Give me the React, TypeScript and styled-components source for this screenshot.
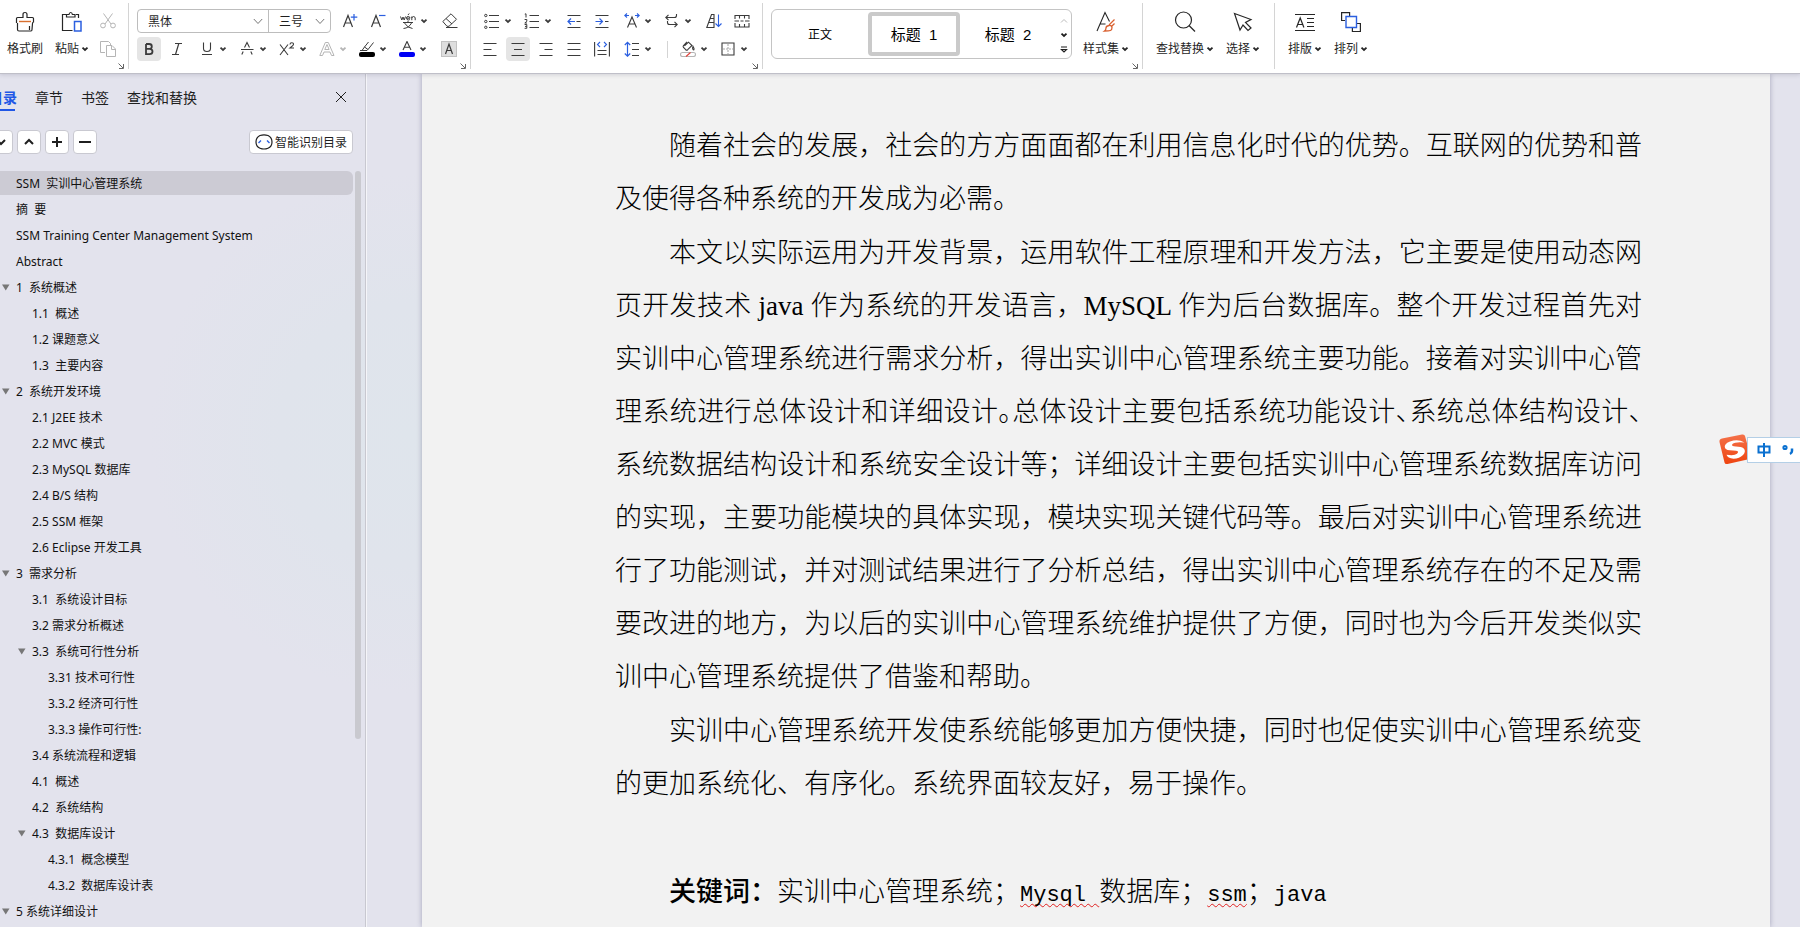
import React from "react";
import styled, { createGlobalStyle, css } from "styled-components";

const INK = "#3b3b3b";
const BLUE = "#2b5fe0";
const UI_FONT = `"Noto Sans", "Noto Sans CJK SC", sans-serif`;

const GlobalStyle = createGlobalStyle`
  * { box-sizing: border-box; }
  body { margin: 0; overflow: hidden; font-family: ${UI_FONT}; font-size: 12px; color: #1f1f1f; }
  button, select { font: inherit; color: inherit; }
  button { border: 0; background: none; padding: 0; }
`;

const Shell = styled.div`
  display: flex;
  flex-direction: column;
  height: 100vh;
`;

/* ---------- ribbon ---------- */

const Ribbon = styled.header`
  position: relative;
  z-index: 1;
  display: flex;
  flex: none;
  height: 74px;
  background: #fff;
  border-bottom: 1px solid #bfbfc8;
  box-shadow: 0 1px 4px rgba(60, 60, 90, 0.18);
  white-space: nowrap;
`;

const Group = styled.section<{ $pad: string }>`
  position: relative;
  display: flex;
  padding: ${(p) => p.$pad};
  &::after {
    content: "";
    position: absolute;
    right: 0;
    top: 3px;
    bottom: 4px;
    border-right: 1px solid #d4d4d4;
  }
  &:last-child::after { display: none; }
`;

const Rows = styled.div`
  display: flex;
  flex-direction: column;
  gap: 4px;
  padding-top: 9px;
`;

const Row = styled.div`
  display: flex;
  align-items: center;
  height: 24px;
`;

const DropTool = styled.button<{ $muted?: boolean }>`
  display: flex;
  align-items: center;
  justify-content: flex-end;
  gap: 4px;
  width: 40px;
  height: 24px;
  padding-right: 4px;
  color: ${(p) => (p.$muted ? "#b5b5b5" : INK)};
`;

const Tool = styled.button<{ $active?: boolean; $muted?: boolean }>`
  display: grid;
  place-items: center;
  width: 24px;
  height: 24px;
  margin: 0 2px;
  border-radius: 4px;
  color: ${(p) => (p.$muted ? "#b5b5b5" : INK)};
  background: ${(p) => (p.$active ? "#e5e5e5" : "transparent")};
  ${DropTool} + & { margin-left: 6px; }
`;

const RowRule = styled.span`
  width: 1px;
  height: 17px;
  margin: 0 4px 0 11px;
  background: #d4d4d4;
`;

const BigTool = styled.button`
  display: flex;
  flex-direction: column;
  align-items: center;
  gap: 7px;
  padding-top: 11px;
  height: 60px;
  line-height: 18px;
  color: #262626;
`;

const BigLabel = styled.span`
  display: flex;
  align-items: center;
  gap: 2px;
`;

const Corner = styled.svg`
  position: absolute;
  right: 5px;
  bottom: 4px;
`;

const FontBox = styled.div`
  display: flex;
  width: 194px;
  height: 24px;
  margin: 0 5px 0 2px;
  border: 1px solid #bdbdbd;
  border-radius: 4px;
`;

const Field = styled.label<{ $w: number }>`
  position: relative;
  width: ${(p) => p.$w}px;
  & + & { border-left: 1px solid #bdbdbd; }
  select {
    width: 100%;
    height: 22px;
    padding: 0 0 0 10px;
    border: 0;
    background: none;
    appearance: none;
    outline: none;
  }
  svg { position: absolute; right: 5px; top: 8px; pointer-events: none; }
`;

const Gallery = styled.div`
  display: flex;
  align-items: center;
  width: 301px;
  height: 50px;
  margin-top: 9px;
  border: 1px solid #c4c4c4;
  border-radius: 6px;
`;

const StyleCard = styled.button<{ $active?: boolean; $size: number }>`
  flex: ${(p) => (p.$active ? "0 0 92px" : "1")};
  height: 44px;
  padding-bottom: 2px;
  color: #000;
  font-family: "Liberation Sans", "Noto Sans CJK SC", sans-serif;
  font-size: ${(p) => p.$size}px;
  white-space: pre;
  ${(p) => p.$active && css`border: 4px solid #cacaca; border-radius: 4px;`}
`;

const Scroller = styled.div`
  display: flex;
  flex-direction: column;
  justify-content: space-around;
  align-items: center;
  width: 15px;
  height: 48px;
  padding-top: 4px;
  button { display: flex; }
`;

/* ---------- navigation pane ---------- */

const Workspace = styled.div`
  display: flex;
  flex: 1;
  min-height: 0;
  background: radial-gradient(circle 260px at 410px 360px, #dfe5ec 0, #e0e4ec 50%, #e3e3ed 100%);
`;

const Pane = styled.aside`
  position: relative;
  flex: none;
  width: 367px;
  overflow: hidden;
  border-right: 1px solid #f5f5f9;
  box-shadow: inset -1px 0 #c8c8d0;
`;

const TabBar = styled.div`
  display: flex;
  align-items: center;
  gap: 18px;
  height: 38px;
  margin: 4px 0 0 -11px;
  padding-right: 19px;
  font-size: 14px;
`;

const Tab = styled.button<{ $active?: boolean }>`
  height: 34px;
  padding: 0;
  ${(p) =>
    p.$active &&
    css`
      color: #2157e6;
      font-weight: 700;
      background: linear-gradient(#2157e6, #2157e6) left 0 bottom 3px / 26px 2px no-repeat;
    `}
`;

const CloseButton = styled.button`
  display: flex;
  margin-left: auto;
`;

const PaneTools = styled.div`
  display: flex;
  gap: 4px;
  margin: 14px 13px 17px -11px;
`;

const PaneButton = styled.button`
  display: flex;
  align-items: center;
  justify-content: center;
  gap: 2px;
  min-width: 24px;
  height: 24px;
  border: 1px solid #c9c9d1;
  border-radius: 4px;
  background: #fff;
`;

const SmartButton = styled(PaneButton)`
  width: 104px;
  margin-left: auto;
`;

const Outline = styled.ul`
  display: flex;
  flex-direction: column;
  gap: 2px;
  margin: 0;
  padding: 0 13px 0 0;
  list-style: none;
`;

const OutlineItem = styled.li<{ $level: number; $active?: boolean }>`
  display: flex;
  align-items: center;
  height: 24px;
  padding-left: ${(p) => p.$level * 16}px;
  border-radius: 0 6px 6px 0;
  white-space: pre;
  color: #111;
  background: ${(p) => (p.$active ? "#cccbd4" : "transparent")};
`;

const Twisty = styled.span`
  display: flex;
  width: 16px;
  padding-left: 2px;
`;

const ScrollThumb = styled.div`
  position: absolute;
  top: 97px;
  right: 5px;
  width: 6px;
  height: 568px;
  border-radius: 3px;
  background: #c9c9cf;
`;

/* ---------- document ---------- */

const Sheet = styled.main`
  flex: 1;
  margin: 0 30px 0 55px;
  padding: 46px 128px 0 193px;
  overflow: hidden;
  background: #f2f2f2;
  box-shadow: 0 0 5px rgba(70, 70, 110, 0.4);
  color: #000;
  font-family: "Liberation Serif", "Noto Sans CJK SC", serif;
  font-size: 27px;
  font-weight: 300;
  line-height: 53px;
`;

const Paragraph = styled.p`
  margin: 0 0 1px;
  text-indent: 54px;
`;

const Line = styled.span<{ $full?: boolean }>`
  display: block;
  white-space: nowrap;
  text-align-last: ${(p) => (p.$full ? "justify" : "left")};
  & + & { text-indent: 0; }
`;

const Half = styled.span`
  font-feature-settings: "halt";
`;

const Keyword = styled.strong`
  font-weight: 500;
`;

const Mono = styled.span<{ $flagged?: boolean }>`
  font-family: "Liberation Mono", monospace;
  font-size: 22px;
  line-height: 1;
  white-space: pre;
  ${(p) =>
    p.$flagged &&
    css`
      text-decoration: underline wavy #e02020 1px;
      text-decoration-skip-ink: none;
      text-underline-offset: 2px;
    `}
`;

const ImeBar = styled.div`
  position: fixed;
  z-index: 2;
  top: 434px;
  right: 0;
  display: flex;
  align-items: center;
  height: 32px;
`;

const ImeStatus = styled.div`
  display: flex;
  align-items: center;
  gap: 11px;
  width: 53px;
  height: 26px;
  margin-left: -4px;
  padding-left: 9px;
  border: 1px solid #b4cfe6;
  border-right: 0;
  background: #fff;
`;

/* ---------- icons ---------- */

type IconProps = { w?: number; h?: number; children: React.ReactNode; sw?: number };
const Icon = ({ w = 16, h = 16, sw = 1, children }: IconProps) => (
  <svg width={w} height={h} viewBox={`0 0 ${w} ${h}`} fill="none" stroke="currentColor" strokeWidth={sw} aria-hidden="true">
    {children}
  </svg>
);

const Caret = () => (
  <Icon w={8} h={6} sw={1.8}>
    <path d="M1.5 1.6 4 4 6.5 1.6" />
  </Icon>
);
const WideCaret = () => (
  <Icon w={10} h={7}>
    <path d="M.8 1 5 5.500 9.200 1" stroke="#777" />
  </Icon>
);
const Launcher = () => (
  <Corner width="6" height="6" viewBox="0 0 6 6" fill="none" stroke="#666" aria-hidden="true">
    <path d="M.5 .5 5 5M5.500 1v4.500H1" />
  </Corner>
);

const BrushIcon = () => (
  <Icon w={20} h={22} sw={1.2}>
    <path d="M1.500 12V7.500q0-1 1-1H8V3.500q0-2 2-2t2 2v3h5.500q1 0 1 1V11q-1 .2-1 1.500l-.5 6q0 1.500-1 1.500H4q-1.500 0-1.500-1.500V12" />
    <path d="M4 10.500h12" stroke="#d9702f" strokeWidth="1.4" />
    <path d="M14.500 15v4" />
  </Icon>
);
const PasteIcon = () => (
  <Icon w={22} h={22} sw={1.2}>
    <path d="M6 3.500H1.500v16h10M15 3.500h2.500V7" />
    <path d="M5.500 6V3.500H8q.3-2 1.700-2t1.700 2h2.600V6z" />
    <path d="M13.500 10.500h6.500v9.500h-6.500z" stroke={BLUE} strokeWidth="1.500" />
  </Icon>
);
const CutIcon = () => (
  <Icon>
    <path d="M3.500 .5 11 11M12.500 .5 5 11" />
    <circle cx="3" cy="12.500" r="2.400" />
    <circle cx="13" cy="12.500" r="2.400" />
  </Icon>
);
const CopyIcon = () => (
  <Icon>
    <path d="M5 11.500H.5V.5h8l2 2V4" />
    <path d="M6.500 4.500h5.500l3.500 3.500v7.500h-9z M11.500 4.500v4h4" />
  </Icon>
);

const GrowIcon = () => (
  <Icon sw={1.2}>
    <path d="M1.500 14 6 2.500 10.500 14M3 10h6" />
    <path d="M12 1v6.500M8.800 4.200h6.500" stroke={BLUE} />
  </Icon>
);
const ShrinkIcon = () => (
  <Icon sw={1.2}>
    <path d="M1.500 14 6 2.500 10.500 14M3 10h6" />
    <path d="M9 2.500h6.500" stroke={BLUE} />
  </Icon>
);
const PhoneticIcon = () => (
  <Icon>
    <path d="M.5 3.500 1.800 7 3 4l1.200 3L5.500 3.500M6.500 5.200h3.500q0-1.700-1.800-1.700T6.500 5.200t1.800 1.800q1 0 1.600-.7M8 2l1.200-1.500M11.800 7.200V3.500M11.800 5q.5-1.500 1.800-1.500t1.600 1.500v2.200" />
    <path d="M3 9.500h10M8 8v1.500M4.500 10q3 5 8 5.500M11.500 10q-2.500 5-8 5.500" />
  </Icon>
);
const EraserIcon = () => (
  <Icon>
    <path d="M.8 8.500 9 .8l5.500 5.500-7.500 7H5zM4 5.500l6 5.500M4 14.500h11.500" />
  </Icon>
);
const BoldIcon = () => (
  <Icon sw={1.8}>
    <path d="M5 3v10.200h3.500q3 0 3-2.600T8.500 7.900H5M5 3h3.200q2.600 0 2.600 2.400T8.200 7.900" />
  </Icon>
);
const ItalicIcon = () => (
  <Icon sw={1.2}>
    <path d="M6 2.500h7M3 13.500h7M9.800 2.500 6.500 13.500" />
  </Icon>
);
const UnderlineIcon = () => (
  <Icon sw={1.1}>
    <path d="M4.500 1.500v6q0 3 3.500 3t3.500-3v-6M3 13.500h10" />
  </Icon>
);
const StrikeIcon = () => (
  <Icon sw={1.1}>
    <path d="M5.500 6.500 8 1.500l2.500 5M2 8.500h12.500M4.200 10.500l-1.400 3M11.800 10.500l1.400 3" />
  </Icon>
);
const SuperIcon = () => (
  <Icon sw={1.1}>
    <path d="M1 3.500 9 14M9 3.500 1 14M11 3.500q0-1.700 1.800-1.700t1.700 1.500q0 1-3.500 3.700h4" />
  </Icon>
);
const OutlineAIcon = () => (
  <Icon>
    <path d="M.8 14.500 6.300 1.500h3L15 14.500h-2.500L11 11H5l-1.500 3.500zM5.800 8.500h4.300L8 3.500z" />
  </Icon>
);
const HighlightIcon = () => (
  <Icon>
    <path d="M14.500 1.500 9 8.500 5.500 6 9.500 1M5.500 6 3 9.500h5L9 8.500M1 9.500h2" />
    <rect x="0" y="11" width="16" height="5" rx="2" fill="#000" stroke="none" />
  </Icon>
);
const FontColorIcon = () => (
  <Icon sw={1.1}>
    <path d="M4 9 8 .5 12 9M5.500 6.200h5" />
    <rect x="0" y="11" width="16" height="5" rx="2" fill="#0000f5" stroke="none" />
  </Icon>
);
const ShadeAIcon = () => (
  <Icon sw={1.2}>
    <rect x=".5" y=".5" width="15" height="15" fill="#dedede" stroke="#c2c2c2" strokeWidth="1" />
    <path d="M4.500 13 8 3l3.500 10M5.700 9.500h4.600" />
  </Icon>
);

const BulletsIcon = () => (
  <Icon>
    <path d="M5 2.500h10M5 8.500h10M5 14.500h10" strokeWidth="1.200" />
    <circle cx="1.800" cy="2.500" r="1.200" /><circle cx="1.800" cy="8.500" r="1.200" /><circle cx="1.800" cy="14.300" r="1.200" />
  </Icon>
);
const NumbersIcon = () => (
  <Icon>
    <path d="M5.500 2.500H15M5.500 8.500H15M5.500 14.500H15" strokeWidth="1.200" />
    <path d="M.8 1.200 2 .8v3.700M.6 6.500h2.200v1.800L.8 10h2.200M.6 11.500h2.200v3.800H.6M1 13.400h1.800" />
  </Icon>
);
const OutdentIcon = () => (
  <Icon sw={1.2}>
    <path d="M1.500 2.500h13M10.500 8.500h4M1.500 14.500h13" />
    <path d="M9 8.500H2.500M5 5.500 2 8.500l3 3" stroke={BLUE} />
  </Icon>
);
const IndentIcon = () => (
  <Icon sw={1.2}>
    <path d="M1.500 2.500h13M11 8.500h3.500M1.500 14.500h13" />
    <path d="M1.500 8.500H8M5.500 5.500l3 3-3 3" stroke={BLUE} />
  </Icon>
);
const ScaleAIcon = () => (
  <Icon sw={1.1}>
    <path d="M3.500 14.500 8 4l4.500 10.500M5 11h6" />
    <path d="M5 2.500H.8M3 .5l-2.200 2 2.200 2M11 2.500h4.200M13 .5l2.200 2-2.200 2" stroke={BLUE} />
  </Icon>
);
const WrapIcon = () => (
  <Icon sw={1.1}>
    <path d="M12.500 1v1.500q0 2-2 2H1.800M4.500 1.800 1.800 4.500 4.500 7.200M3.500 8v1.500q0 2 2 2h7.700M10.500 8.800l2.700 2.700-2.700 2.700" />
  </Icon>
);
const SortIcon = () => (
  <Icon sw={1.1}>
    <path d="M.8 14.500 5.500 1.500h2.500v13zM4.200 5.500H8M2.800 9.500H8" />
    <path d="M12.500 1.500v12M9.500 10.500l3 3 3-3" stroke={BLUE} />
  </Icon>
);
const GridMarksIcon = () => (
  <Icon sw={1.1}>
    <path d="M1 6V2.500h14V6M1 10v4h14v-4M5.500 2.500v3M10.500 2.500v3M5.500 14v-3M10.500 14v-3M.5 8H5M6.500 8h3M11 8h4.500" />
  </Icon>
);
const AlignIcon = ({ d }: { d: string }) => (
  <Icon sw={1.2}>
    <path d={d} />
  </Icon>
);
const DistributeIcon = () => (
  <Icon sw={1.1}>
    <path d="M.6 1v14.500M15.400 1v14.500M3.500 9.500h9M3.500 13.500h9" />
    <path d="M6 1 3.500 3.500 6 6M10 1l2.500 2.500L10 6" stroke={BLUE} />
  </Icon>
);
const SpacingIcon = () => (
  <Icon sw={1.2}>
    <path d="M8 2.500h7M8 8.500h7M8 14.500h7" />
    <path d="M3.500 1.500v14M.8 4l2.700-2.700L6.200 4M.8 12.500l2.700 2.700 2.700-2.700" stroke={BLUE} />
  </Icon>
);
const BucketIcon = () => (
  <Icon sw={1.1}>
    <path d="M7 .8 3.500 4.500q-.8 1 0 2l2.200 2.200q1 .8 2 0L12 4.500 8.500 1.200 4.500 4.800M13 5.500q-1.200 2 0 3t1-1z" />
    <rect x=".5" y="11.500" width="15" height="4" rx="2" stroke="#b5b5b5" />
    <path d="m6 15.500 4.500-4" stroke="#e0413a" />
  </Icon>
);
const BorderIcon = () => (
  <Icon sw={1.1}>
    <path d="M2 2h12v12H2z" />
    <path d="M8 3v10M3 8h10" stroke="#aaa" strokeDasharray="2 1" />
  </Icon>
);
const StyleSetIcon = () => (
  <Icon w={20} h={22} sw={1.1}>
    <path d="M1 20 9 1.500l4.500 9M4 13h5.500" />
    <path d="M18.500 8.500 13 14M18.500 12.500 15 16M8.500 20q1.500-1 1.500-3t3-2.500 3 2-1.500 3-6 .5z" stroke="#d9602f" strokeWidth="1.300" />
  </Icon>
);
const SearchIcon = () => (
  <Icon w={22} h={22} sw={1.2}>
    <circle cx="9.500" cy="9" r="8" />
    <path d="m15 14.500 6 6" />
  </Icon>
);
const PointerIcon = () => (
  <Icon w={20} h={22} sw={1.2}>
    <path d="M1.500 2.500 18 8.500 12.500 11.500 18 17l-3 2.500-5-5.500-3 5z" />
  </Icon>
);
const TypesetIcon = () => (
  <Icon w={20} h={22} sw={1.2}>
    <path d="M0 3.500h20M0 19.500h20M12 7.500h7M12 11.500h7M12 15.500h7M1.500 16.500 5.200 7l3.700 9.500M2.800 13.500h4.800" />
  </Icon>
);
const ArrangeIcon = () => (
  <Icon w={20} h={22} sw={1.2}>
    <path d="M4 9.500H.6V1.600h8V5M16 12.500h3.400v8h-8V17" />
    <path d="M5 5.500h10.500v11H5z" stroke={BLUE} strokeWidth="1.400" />
  </Icon>
);

/* ---------- content ---------- */

const OUTLINE: { level: number; text: string; open?: boolean }[] = [
  { level: 0, text: "SSM  实训中心管理系统" },
  { level: 0, text: "摘  要" },
  { level: 0, text: "SSM Training Center Management System" },
  { level: 0, text: "Abstract" },
  { level: 0, text: "1  系统概述", open: true },
  { level: 1, text: "1.1  概述" },
  { level: 1, text: "1.2 课题意义" },
  { level: 1, text: "1.3  主要内容" },
  { level: 0, text: "2  系统开发环境", open: true },
  { level: 1, text: "2.1 J2EE 技术" },
  { level: 1, text: "2.2 MVC 模式" },
  { level: 1, text: "2.3 MySQL 数据库" },
  { level: 1, text: "2.4 B/S 结构" },
  { level: 1, text: "2.5 SSM 框架" },
  { level: 1, text: "2.6 Eclipse 开发工具" },
  { level: 0, text: "3  需求分析", open: true },
  { level: 1, text: "3.1  系统设计目标" },
  { level: 1, text: "3.2 需求分析概述" },
  { level: 1, text: "3.3  系统可行性分析", open: true },
  { level: 2, text: "3.31 技术可行性" },
  { level: 2, text: "3.3.2 经济可行性" },
  { level: 2, text: "3.3.3 操作可行性:" },
  { level: 1, text: "3.4 系统流程和逻辑" },
  { level: 1, text: "4.1  概述" },
  { level: 1, text: "4.2  系统结构" },
  { level: 1, text: "4.3  数据库设计", open: true },
  { level: 2, text: "4.3.1  概念模型" },
  { level: 2, text: "4.3.2  数据库设计表" },
  { level: 0, text: "5 系统详细设计", open: true },
];

const PARAGRAPHS: React.ReactNode[][] = [
  ["随着社会的发展，社会的方方面面都在利用信息化时代的优势。互联网的优势和普", "及使得各种系统的开发成为必需。"],
  [
    "本文以实际运用为开发背景，运用软件工程原理和开发方法，它主要是使用动态网",
    "页开发技术 java 作为系统的开发语言，MySQL 作为后台数据库。整个开发过程首先对",
    "实训中心管理系统进行需求分析，得出实训中心管理系统主要功能。接着对实训中心管",
    <>理系统进行总体设计和详细设计<Half>。</Half>总体设计主要包括系统功能设计<Half>、</Half>系统总体结构设计<Half>、</Half></>,
    "系统数据结构设计和系统安全设计等；详细设计主要包括实训中心管理系统数据库访问",
    "的实现，主要功能模块的具体实现，模块实现关键代码等。最后对实训中心管理系统进",
    "行了功能测试，并对测试结果进行了分析总结，得出实训中心管理系统存在的不足及需",
    "要改进的地方，为以后的实训中心管理系统维护提供了方便，同时也为今后开发类似实",
    "训中心管理系统提供了借鉴和帮助。",
  ],
  ["实训中心管理系统开发使系统能够更加方便快捷，同时也促使实训中心管理系统变", "的更加系统化、有序化。系统界面较友好，易于操作。"],
];

const Labelled = ({ icon, text, caret = true }: { icon: React.ReactNode; text: string; caret?: boolean }) => (
  <BigTool>
    {icon}
    <BigLabel>
      {text}
      {caret && <Caret />}
    </BigLabel>
  </BigTool>
);

const Drop = ({ label, muted, children }: { label: string; muted?: boolean; children: React.ReactNode }) => (
  <DropTool aria-label={label} $muted={muted}>
    {children}
    <Caret />
  </DropTool>
);

const ClipGroup = styled(Group)`
  width: 129px;
  gap: 12px;
`;
const ClipRows = styled(Rows)`
  margin-left: -7px;
`;
const StylesGroup = styled(Group)`
  width: 380px;
  gap: 11px;
`;
const WideGroup = styled(Group)`
  gap: 12px;
`;

export default function App() {
  return (
    <Shell>
      <GlobalStyle />
      <Ribbon>
        <ClipGroup $pad="0 0 0 7px">
          <Labelled icon={<BrushIcon />} text="格式刷" caret={false} />
          <Labelled icon={<PasteIcon />} text="粘贴" />
          <ClipRows>
            <Row><Tool aria-label="剪切" $muted><CutIcon /></Tool></Row>
            <Row><Tool aria-label="复制" $muted><CopyIcon /></Tool></Row>
          </ClipRows>
          <Launcher />
        </ClipGroup>

        <Group $pad="0 7px 0 6px">
          <Rows>
            <Row>
              <FontBox>
                <Field $w={130}>
                  <select aria-label="字体"><option>黑体</option></select>
                  <WideCaret />
                </Field>
                <Field $w={62}>
                  <select aria-label="字号"><option>三号</option></select>
                  <WideCaret />
                </Field>
              </FontBox>
              <Tool aria-label="增大字号"><GrowIcon /></Tool>
              <Tool aria-label="减小字号"><ShrinkIcon /></Tool>
              <Drop label="拼音指南"><PhoneticIcon /></Drop>
              <Tool aria-label="清除格式"><EraserIcon /></Tool>
            </Row>
            <Row>
              <Tool aria-label="加粗" $active><BoldIcon /></Tool>
              <Tool aria-label="倾斜"><ItalicIcon /></Tool>
              <Drop label="下划线"><UnderlineIcon /></Drop>
              <Drop label="删除线"><StrikeIcon /></Drop>
              <Drop label="上标"><SuperIcon /></Drop>
              <Drop label="文字效果" muted><OutlineAIcon /></Drop>
              <Drop label="突出显示"><HighlightIcon /></Drop>
              <Drop label="字体颜色"><FontColorIcon /></Drop>
              <Tool aria-label="字符底纹"><ShadeAIcon /></Tool>
            </Row>
          </Rows>
          <Launcher />
        </Group>

        <Group $pad="0 7px 0 5px">
          <Rows>
            <Row>
              <Drop label="项目符号"><BulletsIcon /></Drop>
              <Drop label="编号"><NumbersIcon /></Drop>
              <Tool aria-label="减少缩进量"><OutdentIcon /></Tool>
              <Tool aria-label="增加缩进量"><IndentIcon /></Tool>
              <Drop label="中文版式"><ScaleAIcon /></Drop>
              <Drop label="换行"><WrapIcon /></Drop>
              <Tool aria-label="排序"><SortIcon /></Tool>
              <Tool aria-label="制表位"><GridMarksIcon /></Tool>
            </Row>
            <Row>
              <Tool aria-label="左对齐"><AlignIcon d="M1.500 2.500h13M1.500 8.500h8M1.500 14.500h13" /></Tool>
              <Tool aria-label="居中" $active><AlignIcon d="M1.500 2.500h13M4 8.500h8M1.500 14.500h13" /></Tool>
              <Tool aria-label="右对齐"><AlignIcon d="M1.500 2.500h13M6.500 8.500h8M1.500 14.500h13" /></Tool>
              <Tool aria-label="两端对齐"><AlignIcon d="M1.500 2.500h13M1.500 8.500h13M1.500 14.500h13" /></Tool>
              <Tool aria-label="分散对齐"><DistributeIcon /></Tool>
              <Drop label="行距"><SpacingIcon /></Drop>
              <RowRule />
              <Drop label="底纹颜色"><BucketIcon /></Drop>
              <Drop label="边框"><BorderIcon /></Drop>
            </Row>
          </Rows>
          <Launcher />
        </Group>

        <StylesGroup $pad="0 0 0 8px">
          <Gallery>
            <StyleCard $size={12}>正文</StyleCard>
            <StyleCard $size={15} $active>标题  1</StyleCard>
            <StyleCard $size={15}>标题  2</StyleCard>
            <Scroller>
              <button aria-label="上一行"><Icon w={8} h={6}><path d="M1 4.500 4 1.500l3 3" stroke="#bbb" /></Icon></button>
              <button aria-label="下一行"><Caret /></button>
              <button aria-label="更多样式"><Icon w={8} h={8} sw={1.2}><path d="M1 1h6M1.500 3.500 4 6l2.500-2.500z" /></Icon></button>
            </Scroller>
          </Gallery>
          <Labelled icon={<StyleSetIcon />} text="样式集" />
          <Launcher />
        </StylesGroup>

        <WideGroup $pad="0 15px 0 13px">
          <Labelled icon={<SearchIcon />} text="查找替换" />
          <Labelled icon={<PointerIcon />} text="选择" />
        </WideGroup>

        <WideGroup $pad="0 13px">
          <Labelled icon={<TypesetIcon />} text="排版" />
          <Labelled icon={<ArrangeIcon />} text="排列" />
        </WideGroup>
      </Ribbon>

      <Workspace>
        <Pane>
          <TabBar>
            <Tab $active>目录</Tab>
            <Tab>章节</Tab>
            <Tab>书签</Tab>
            <Tab>查找和替换</Tab>
            <CloseButton aria-label="关闭"><Icon w={12} h={12}><path d="m1 1 10 10M11 1 1 11" /></Icon></CloseButton>
          </TabBar>
          <PaneTools>
            <PaneButton aria-label="展开"><Icon w={12} h={12} sw={2}><path d="m2 4 4 4 4-4" /></Icon></PaneButton>
            <PaneButton aria-label="收起"><Icon w={12} h={12} sw={2}><path d="m2 8 4-4 4 4" /></Icon></PaneButton>
            <PaneButton aria-label="升级"><Icon w={12} h={12} sw={2}><path d="M1 6h10M6 1v10" /></Icon></PaneButton>
            <PaneButton aria-label="降级"><Icon w={12} h={12} sw={2}><path d="M0 6h12" /></Icon></PaneButton>
            <SmartButton>
              <Icon w={18} h={16} sw={1.2}>
                <path d="M5 1.500Q9 .2 13 1.500q4 2 4 6.500t-4 6.200q-4 1.600-8 0Q1 12.500 1 8t4-6.500z" />
                <path d="M3.500 9 6 6.500M12 6.500 14.500 9" stroke={BLUE} strokeWidth="1.400" />
              </Icon>
              智能识别目录
            </SmartButton>
          </PaneTools>
          <Outline>
            {OUTLINE.map((item, i) => (
              <OutlineItem key={item.text} $level={item.level} $active={i === 0}>
                <Twisty>
                  {item.open && (
                    <svg width="8" height="7" viewBox="0 0 8 7" aria-hidden="true">
                      <path d="M0 .5h7.500L3.750 6.500z" fill="#777" />
                    </svg>
                  )}
                </Twisty>
                {item.text}
              </OutlineItem>
            ))}
          </Outline>
          <ScrollThumb />
        </Pane>

        <Sheet>
          {PARAGRAPHS.map((lines, p) => (
            <Paragraph key={p}>
              {lines.map((line, i) => (
                <Line key={i} $full={i < lines.length - 1}>{line}</Line>
              ))}
            </Paragraph>
          ))}
          <Paragraph><br /></Paragraph>
          <Paragraph>
            <Line>
              <Keyword>关键词：</Keyword>实训中心管理系统；<Mono $flagged>Mysql </Mono>数据库；<Mono $flagged>ssm</Mono>；<Mono>java</Mono>
            </Line>
          </Paragraph>
        </Sheet>
      </Workspace>

      <ImeBar>
        <svg width="32" height="32" viewBox="0 0 32 32" aria-hidden="true">
          <defs>
            <linearGradient id="ime" x1="0" y1="0" x2="0" y2="1">
              <stop offset="0" stopColor="#f4724a" />
              <stop offset="1" stopColor="#ee4410" />
            </linearGradient>
          </defs>
          <path d="M3 4.500 23 .5q2.500-.5 3 1.500l5.500 20q.5 2.500-2 3.200L8.500 30q-2.500 .5-3-1.500L.5 8q-.5-3 2.500-3.500z" fill="url(#ime)" />
          <path d="M25.500 8.500Q19 4.500 11 7.500 4.500 10 6 14q1 2.500 8 2.500 7.500 0 4 3.300-2.500 2.200-10.500 1 1 3.500 7 4 6-.2 9.500-3.800 3.500-4 .5-6.800-2-1.700-7.500-1.700-5.500-.1-3.500-2.500 2.500-2.400 12-1.500z" fill="#fff" />
        </svg>
        <ImeStatus>
          <Icon w={14} h={16} sw={2}><path d="M1.500 4.500h11v6h-11zM7 1v14" stroke="#0a70d0" /></Icon>
          <Icon w={13} h={12} sw={2}>
            <circle cx="3" cy="3.500" r="1.600" stroke="#0a70d0" />
            <path d="M10 4.500v2.500q0 2-2 3" stroke="#0a70d0" strokeWidth="2.500" />
          </Icon>
        </ImeStatus>
      </ImeBar>
    </Shell>
  );
}
